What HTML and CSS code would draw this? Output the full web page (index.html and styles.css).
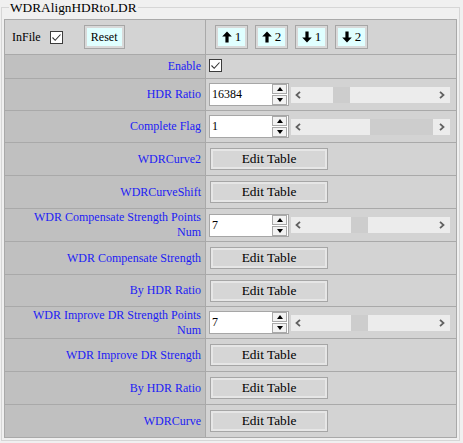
FILE: index.html
```html
<!DOCTYPE html>
<html>
<head>
<meta charset="utf-8">
<link rel="stylesheet" href="styles.css">
</head>
<body>
<fieldset class="panel">
  <legend class="panel-title">WDRAlignHDRtoLDR</legend>
  <table class="grid">
    <colgroup><col class="col-label"><col class="col-value"></colgroup>
    <tr class="row-head">
      <td class="head-left">
        <div class="head-tools">
          <span class="infile">InFile</span>
          <span class="check"><svg viewBox="0 0 13 13" width="13" height="13"><path d="M2.5 6.5 L5.2 9.3 L10.5 3.5" fill="none" stroke="#333" stroke-width="1.1"/></svg></span>
          <button class="btn-cyan btn-reset">Reset</button>
        </div>
      </td>
      <td class="head-right">
        <div class="arrows">
          <button class="btn-cyan btn-arrow"><svg class="arr" viewBox="0 0 10 12" width="10" height="12"><path d="M5 0.5 L9.8 5.6 L6.6 5.6 L6.6 11.5 L3.4 11.5 L3.4 5.6 L0.2 5.6 Z" fill="#000"/></svg><span>1</span></button>
          <button class="btn-cyan btn-arrow"><svg class="arr" viewBox="0 0 10 12" width="10" height="12"><path d="M5 0.5 L9.8 5.6 L6.6 5.6 L6.6 11.5 L3.4 11.5 L3.4 5.6 L0.2 5.6 Z" fill="#000"/></svg><span>2</span></button>
          <button class="btn-cyan btn-arrow"><svg class="arr" viewBox="0 0 10 12" width="10" height="12"><path d="M5 11.5 L9.8 6.4 L6.6 6.4 L6.6 0.5 L3.4 0.5 L3.4 6.4 L0.2 6.4 Z" fill="#000"/></svg><span>1</span></button>
          <button class="btn-cyan btn-arrow"><svg class="arr" viewBox="0 0 10 12" width="10" height="12"><path d="M5 11.5 L9.8 6.4 L6.6 6.4 L6.6 0.5 L3.4 0.5 L3.4 6.4 L0.2 6.4 Z" fill="#000"/></svg><span>2</span></button>
        </div>
      </td>
    </tr>
    <tr class="row-check">
      <td class="label">Enable</td>
      <td class="value"><span class="check check-block"><svg viewBox="0 0 13 13" width="13" height="13"><path d="M2.5 6.5 L5.2 9.3 L10.5 3.5" fill="none" stroke="#333" stroke-width="1.1"/></svg></span></td>
    </tr>
    <tr class="row-input">
      <td class="label">HDR Ratio</td>
      <td class="value">
        <div class="field">
          <div class="num"><span class="num-text">16384</span><span class="spin"><span class="spin-btn"><i class="tri-up"></i></span><span class="spin-btn"><i class="tri-down"></i></span></span></div>
          <div class="track"><svg class="chev" viewBox="0 0 6 8" width="6" height="8"><path d="M5 0.8 L1.5 4 L5 7.2" fill="none" stroke="#606060" stroke-width="1.8"/></svg><span class="thumb" style="left:42px;width:17px"></span><svg class="chev chev-r" viewBox="0 0 6 8" width="6" height="8"><path d="M1 0.8 L4.5 4 L1 7.2" fill="none" stroke="#606060" stroke-width="1.8"/></svg></div>
        </div>
      </td>
    </tr>
    <tr class="row-input">
      <td class="label">Complete Flag</td>
      <td class="value">
        <div class="field">
          <div class="num"><span class="num-text">1</span><span class="spin"><span class="spin-btn"><i class="tri-up"></i></span><span class="spin-btn"><i class="tri-down"></i></span></span></div>
          <div class="track"><svg class="chev" viewBox="0 0 6 8" width="6" height="8"><path d="M5 0.8 L1.5 4 L5 7.2" fill="none" stroke="#606060" stroke-width="1.8"/></svg><span class="thumb" style="left:79px;width:63px"></span><svg class="chev chev-r" viewBox="0 0 6 8" width="6" height="8"><path d="M1 0.8 L4.5 4 L1 7.2" fill="none" stroke="#606060" stroke-width="1.8"/></svg></div>
        </div>
      </td>
    </tr>
    <tr class="row-btn">
      <td class="label">WDRCurve2</td>
      <td class="value"><button class="btn-edit">Edit Table</button></td>
    </tr>
    <tr class="row-btn">
      <td class="label">WDRCurveShift</td>
      <td class="value"><button class="btn-edit">Edit Table</button></td>
    </tr>
    <tr class="row-btn">
      <td class="label label-wrap">WDR Compensate Strength Points Num</td>
      <td class="value">
        <div class="field">
          <div class="num"><span class="num-text">7</span><span class="spin"><span class="spin-btn"><i class="tri-up"></i></span><span class="spin-btn"><i class="tri-down"></i></span></span></div>
          <div class="track"><svg class="chev" viewBox="0 0 6 8" width="6" height="8"><path d="M5 0.8 L1.5 4 L5 7.2" fill="none" stroke="#606060" stroke-width="1.8"/></svg><span class="thumb" style="left:60px;width:17px"></span><svg class="chev chev-r" viewBox="0 0 6 8" width="6" height="8"><path d="M1 0.8 L4.5 4 L1 7.2" fill="none" stroke="#606060" stroke-width="1.8"/></svg></div>
        </div>
      </td>
    </tr>
    <tr class="row-btn">
      <td class="label">WDR Compensate Strength</td>
      <td class="value"><button class="btn-edit">Edit Table</button></td>
    </tr>
    <tr class="row-input">
      <td class="label">By HDR Ratio</td>
      <td class="value"><button class="btn-edit">Edit Table</button></td>
    </tr>
    <tr class="row-input">
      <td class="label label-wrap">WDR Improve DR Strength Points Num</td>
      <td class="value">
        <div class="field">
          <div class="num"><span class="num-text">7</span><span class="spin"><span class="spin-btn"><i class="tri-up"></i></span><span class="spin-btn"><i class="tri-down"></i></span></span></div>
          <div class="track"><svg class="chev" viewBox="0 0 6 8" width="6" height="8"><path d="M5 0.8 L1.5 4 L5 7.2" fill="none" stroke="#606060" stroke-width="1.8"/></svg><span class="thumb" style="left:60px;width:17px"></span><svg class="chev chev-r" viewBox="0 0 6 8" width="6" height="8"><path d="M1 0.8 L4.5 4 L1 7.2" fill="none" stroke="#606060" stroke-width="1.8"/></svg></div>
        </div>
      </td>
    </tr>
    <tr class="row-btn">
      <td class="label">WDR Improve DR Strength</td>
      <td class="value"><button class="btn-edit">Edit Table</button></td>
    </tr>
    <tr class="row-btn">
      <td class="label">By HDR Ratio</td>
      <td class="value"><button class="btn-edit">Edit Table</button></td>
    </tr>
    <tr class="row-btn">
      <td class="label">WDRCurve</td>
      <td class="value"><button class="btn-edit">Edit Table</button></td>
    </tr>
  </table>
</fieldset>
</body>
</html>
```

FILE: styles.css
```css
html, body {
  margin: 0;
  padding: 0;
  background: #f0f0f0;
  font-family: "Liberation Serif", "Times New Roman", serif;
  color: #000;
}

.panel {
  margin: 0 0 0 1px;
  padding: 4px 2px 2px 2px;
  border: 1px solid #d6d6d6;
  width: 453px;
}

.panel-title {
  margin-left: 5px;
  padding: 0 1px;
  font-size: 13.33px;
  line-height: 15px;
}

.grid {
  border-collapse: collapse;
  table-layout: fixed;
  width: 453px;
  border: 1px solid #a3a3a3;
}

.col-label { width: 201px; }

.grid td {
  border: 1px solid #a9a9a9;
  padding: 0;
  vertical-align: middle;
  font-family: "Liberation Serif", "Times New Roman", serif;
}

.row-head { height: 35px; }
.row-check { height: 24px; }
.row-input { height: 32px; }
.row-btn { height: 33px; }

.head-left, .head-right { background: #d3d3d3; }

.label {
  background: #c0c0c0;
  color: #1c1cf5;
  font-size: 12px;
  line-height: 15px;
  text-align: right;
  padding: 0 4px 0 20px !important;
}

.label-wrap { padding-left: 26px !important; }

.value {
  background: #d3d3d3;
  padding: 0 0 0 3px !important;
}

.head-tools {
  display: flex;
  align-items: center;
  padding-left: 7px;
  font-size: 12px;
}

.infile { margin-right: 9px; }

.check {
  display: inline-flex;
  width: 13px;
  height: 13px;
  box-sizing: border-box;
  border: 1px solid #3c3c3c;
  background: #fff;
  align-items: center;
  justify-content: center;
  vertical-align: middle;
}
.check svg { display: block; margin: -1px; }

.check-block {
  display: flex;
  margin-top: -2px;
}

.btn-cyan {
  box-sizing: border-box;
  height: 24px;
  background: #e0ffff;
  border: 1px solid #a6a6a6;
  box-shadow: inset 0 0 0 2px #d9d9d9;
  font-family: "Liberation Serif", serif;
  font-size: 12px;
  color: #000;
  padding: 0;
  margin: 0;
}

.btn-reset {
  width: 41px;
  margin-left: 21px;
}

.arrows {
  display: flex;
  gap: 7px;
  padding-left: 9px;
}

.btn-arrow {
  width: 33px;
  display: inline-flex;
  align-items: center;
  justify-content: center;
  gap: 3px;
  font-size: 13px;
}

.btn-arrow .arr { display: block; }

.field {
  display: flex;
  align-items: center;
  gap: 2px;
}

.num {
  box-sizing: border-box;
  width: 80px;
  height: 23px;
  background: #fff;
  border: 1px solid #a6a6a6;
  display: flex;
  align-items: center;
}

.num-text {
  font-size: 12px;
  padding-left: 2px;
  flex: 1;
}

.spin {
  display: flex;
  flex-direction: column;
  gap: 1px;
  margin-right: 1px;
}

.spin-btn {
  box-sizing: border-box;
  width: 15px;
  height: 10px;
  border: 1px solid #a9a9a9;
  background: #f2f2f2;
  display: flex;
  align-items: center;
  justify-content: center;
}

.tri-up, .tri-down {
  width: 0;
  height: 0;
  border-left: 3.5px solid transparent;
  border-right: 3.5px solid transparent;
}
.tri-up { border-bottom: 4px solid #000; }
.tri-down { border-top: 4px solid #000; }

.track {
  position: relative;
  width: 159px;
  height: 16px;
  background: #ececec;
  display: flex;
  align-items: center;
  justify-content: space-between;
  padding: 0 5px 0 4px;
  box-sizing: border-box;
}

.chev { display: block; }

.thumb {
  position: absolute;
  top: 0;
  height: 16px;
  background: #cdcdcd;
}

.btn-edit {
  box-sizing: border-box;
  width: 118px;
  height: 22px;
  margin-left: 1px;
  background: #d6d6d6;
  border: 1px solid #a6a6a6;
  box-shadow: inset 0 0 0 2px #e6e6e6;
  font-family: "Liberation Serif", serif;
  font-size: 13.33px;
  color: #000;
  padding: 0;
  display: block;
}
```
